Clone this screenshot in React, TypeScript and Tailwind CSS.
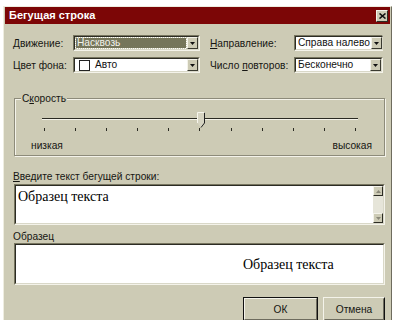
import React from "react";

const font = { fontFamily: '"Liberation Sans", Arial, sans-serif' };
const serif = { fontFamily: '"Liberation Serif", "Times New Roman", serif' };

function Arrow() {
  return (
    <div className="flex h-full w-[11px] shrink-0 items-center justify-center border border-t-[#f4f3ea] border-l-[#f4f3ea] border-r-[#3a3a30] border-b-[#3a3a30] bg-[#cdcbb5]">
      <svg width="5" height="3" viewBox="0 0 5 3">
        <polygon points="0,0 5,0 2.5,3" fill="#111" />
      </svg>
    </div>
  );
}

function Combo({ width, children, selected }: { width: string; children: React.ReactNode; selected?: boolean }) {
  return (
    <div className={`${width} flex h-[16px] shrink-0 border border-t-[#77755f] border-l-[#77755f] border-r-[#f4f3ea] border-b-[#f4f3ea]`}>
      <div className="flex flex-1 border border-t-[#2c2c24] border-l-[#2c2c24] border-r-[#d9d8c8] border-b-[#d9d8c8] bg-white">
        <div className="flex flex-1 items-center overflow-hidden p-[1px]">
          {selected ? (
            <div className="flex h-full flex-1 items-center whitespace-nowrap bg-[#75755a] pl-[1px] leading-none text-[#f2f2ea] outline outline-1 outline-dotted outline-[#c8c8b0]">
              {children}
            </div>
          ) : (
            <div className="flex h-full flex-1 items-center whitespace-nowrap pl-[1px] leading-none text-[#111]">{children}</div>
          )}
        </div>
        <Arrow />
      </div>
    </div>
  );
}

function Sunken({ className, children }: { className: string; children?: React.ReactNode }) {
  return (
    <div className={`${className} flex border border-t-[#77755f] border-l-[#77755f] border-r-[#f4f3ea] border-b-[#f4f3ea]`}>
      <div className="flex flex-1 border border-t-[#2c2c24] border-l-[#2c2c24] border-r-[#d9d8c8] border-b-[#d9d8c8] bg-white">
        {children}
      </div>
    </div>
  );
}

function ScrollBtn({ up }: { up?: boolean }) {
  return (
    <div className="flex h-[10px] w-[10px] items-center justify-center border border-t-[#f4f3ea] border-l-[#f4f3ea] border-r-[#2c2c24] border-b-[#2c2c24] bg-[#cdcbb5]">
      <svg width="5" height="3" viewBox="0 0 5 3">
        <polygon points={up ? "0,3 5,3 2.5,0" : "0,0 5,0 2.5,3"} fill="#8a8878" />
      </svg>
    </div>
  );
}

export default function App() {
  const ticks = Array.from({ length: 11 });
  return (
    <div className="h-[320px] w-[398px] overflow-hidden bg-white" style={font}>
      <div className="ml-[3px] mt-[6px] h-[330px] w-[389px] border border-t-[#eeede0] border-l-[#eeede0] border-r-[#6e6c5e] border-b-[#6e6c5e] bg-[#cdcbb5] px-[1px]">
        {/* Title bar */}
        <div className="flex h-[17px] items-center justify-between bg-[#7c0606] pl-[4px] pr-[2px]">
          <span className="text-[11px] font-bold leading-none text-white">Бегущая строка</span>
          <div className="flex h-[12px] w-[12px] items-center justify-center border border-t-[#f4f3ea] border-l-[#f4f3ea] border-r-[#2c2c24] border-b-[#2c2c24] bg-[#cdcbb5]">
            <svg width="7" height="6" viewBox="0 0 7 6">
              <path d="M0.5 0.5 L6.5 5.5 M6.5 0.5 L0.5 5.5" stroke="#111" strokeWidth="1.6" />
            </svg>
          </div>
        </div>

        <div className="whitespace-nowrap pl-[8px] text-[10.2px] leading-[13px] text-[#161612]">
          {/* Row 1 */}
          <div className="mt-[11px] flex h-[16px] items-center">
            <span className="w-[60px] shrink-0">Движение:</span>
            <Combo width="w-[127px]" selected>
              Насквозь
            </Combo>
            <span className="ml-[10px] w-[84px] shrink-0">
              <span className="underline">Н</span>аправление:
            </span>
            <Combo width="w-[89px]">Справа налево</Combo>
          </div>
          {/* Row 2 */}
          <div className="mt-[6px] flex h-[16px] items-center">
            <span className="w-[60px] shrink-0">Цвет фона:</span>
            <Combo width="w-[127px]">
              <span className="ml-[2px] mr-[5px] inline-block h-[11px] w-[11px] border border-[#222]" />
              Авто
            </Combo>
            <span className="ml-[10px] w-[84px] shrink-0">
              Число <span className="underline">п</span>овторов:
            </span>
            <Combo width="w-[89px]">Бесконечно</Combo>
          </div>

          {/* Speed group */}
          <div className="relative ml-[1px] mt-[25px] h-[58px] w-[371px] border border-[#8d8b7a] shadow-[1px_1px_0_#f4f3ea,inset_1px_1px_0_#f4f3ea]">
            <span className="absolute -top-[7px] left-[6px] bg-[#cdcbb5] px-[1px]">
              С<span className="underline">к</span>орость
            </span>
            <div className="relative ml-[27px] mt-[19px] h-[2px] w-[316px] border-b border-b-[#f4f3ea] bg-[#2a2a22]">
              <svg className="absolute -top-[6px] left-[155px]" width="8" height="16" viewBox="0 0 8 16">
                <polygon points="0.5,0.5 7.5,0.5 7.5,11 4,15.5 0.5,11" fill="#d6d4c2" />
                <path d="M7.5 0.5 L7.5 11 L4 15.5" stroke="#222" fill="none" strokeWidth="1" />
                <path d="M0.5 11 L0.5 0.5 L7.5 0.5" stroke="#f6f5ec" fill="none" strokeWidth="1" />
              </svg>
            </div>
            <div className="ml-[29px] mt-[8px] flex w-[312px] justify-between">
              {ticks.map((_, i) => (
                <span key={i} className="h-[3px] w-[1px] bg-[#2a2a22]" />
              ))}
            </div>
            <div className="mt-[8px] flex justify-between pl-[16px] pr-[12px]">
              <span>низкая</span>
              <span>высокая</span>
            </div>
          </div>

          {/* Text entry */}
          <div className="mt-[14px] h-[14px]">
            <span className="underline">В</span>ведите текст бегущей строки:
          </div>
          <Sunken className="ml-[1px] h-[41px] w-[371px]">
            <div className="flex-1 pl-[2px] pt-[2px] text-[14px] leading-[17px] text-black" style={serif}>
              Образец текста
            </div>
            <div className="flex w-[10px] flex-col justify-between bg-[#e6e5d9]">
              <ScrollBtn up />
              <ScrollBtn />
            </div>
          </Sunken>

          {/* Preview */}
          <div className="mt-[5px] h-[13px]">Образец</div>
          <Sunken className="ml-[1px] h-[42px] w-[371px]">
            <div className="flex flex-1 items-center pl-[227px] text-[14px] leading-[17px] text-black" style={serif}>
              Образец текста
            </div>
          </Sunken>

          {/* Buttons */}
          <div className="ml-[230px] mt-[12px] flex gap-[5px]">
            <div className="flex h-[24px] w-[75px] border border-[#111]">
              <div className="flex flex-1 items-center justify-center border border-t-[#f4f3ea] border-l-[#f4f3ea] border-r-[#6e6c5e] border-b-[#6e6c5e]">
                ОК
              </div>
            </div>
            <div className="flex h-[24px] w-[62px] border border-t-[#f4f3ea] border-l-[#f4f3ea] border-r-[#111] border-b-[#111]">
              <div className="flex flex-1 items-center justify-center border border-transparent border-r-[#6e6c5e] border-b-[#6e6c5e]">
                Отмена
              </div>
            </div>
          </div>
        </div>
      </div>
    </div>
  );
}
